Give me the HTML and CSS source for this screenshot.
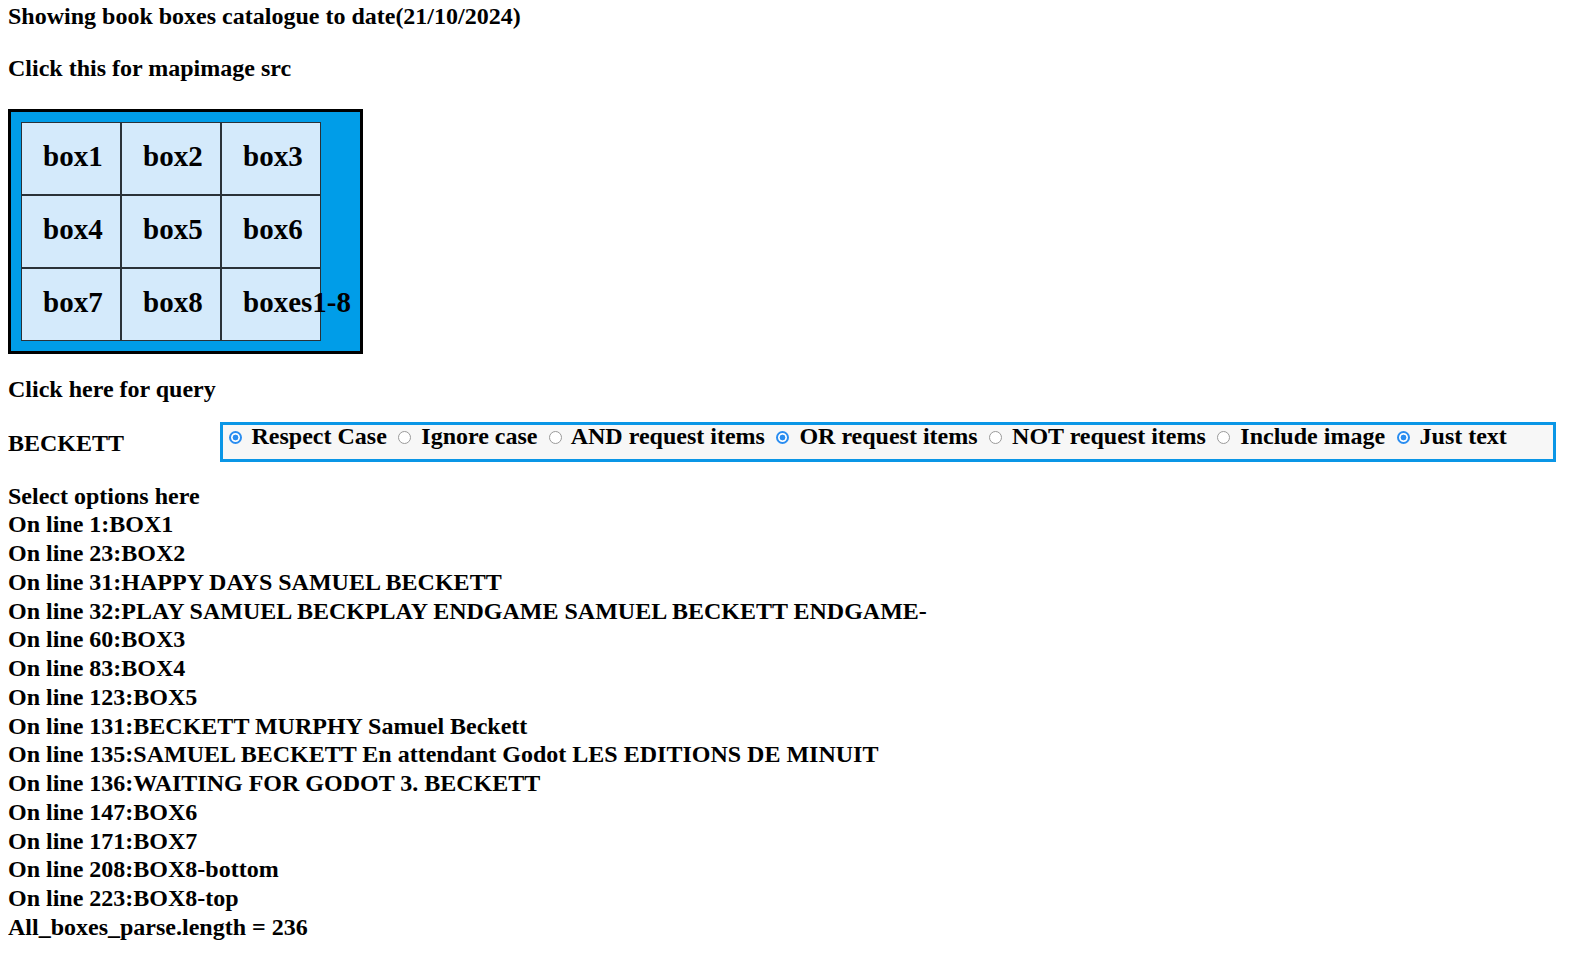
FILE: index.html
```html
<!DOCTYPE html>
<html>
<head>
<meta charset="utf-8">
<title>Book boxes catalogue</title>
<link rel="stylesheet" href="styles.css">
</head>
<body>
<div class="line title">Showing book boxes catalogue to date(21/10/2024)</div>
<div class="line maplink">Click this for mapimage src</div>
<div class="map">
  <div class="grid">
    <div class="cell">box1</div>
    <div class="cell">box2</div>
    <div class="cell">box3</div>
    <div class="cell">box4</div>
    <div class="cell">box5</div>
    <div class="cell">box6</div>
    <div class="cell">box7</div>
    <div class="cell">box8</div>
    <div class="cell">boxes1-8</div>
  </div>
</div>
<div class="line query">Click here for query</div>
<div class="row">
  <div class="line term">BECKETT</div>
  <div class="options"><span class="radio on"></span> Respect Case <span class="radio"></span> Ignore case <span class="radio"></span> AND request items <span class="radio on"></span> OR request items <span class="radio"></span> NOT request items <span class="radio"></span> Include image <span class="radio on"></span> Just text</div>
</div>
<div class="results">
  <div class="line">Select options here</div>
  <div class="line">On line 1:BOX1</div>
  <div class="line">On line 23:BOX2</div>
  <div class="line">On line 31:HAPPY DAYS SAMUEL BECKETT</div>
  <div class="line">On line 32:PLAY SAMUEL BECKPLAY ENDGAME SAMUEL BECKETT ENDGAME-</div>
  <div class="line">On line 60:BOX3</div>
  <div class="line">On line 83:BOX4</div>
  <div class="line">On line 123:BOX5</div>
  <div class="line">On line 131:BECKETT MURPHY Samuel Beckett</div>
  <div class="line">On line 135:SAMUEL BECKETT En attendant Godot LES EDITIONS DE MINUIT</div>
  <div class="line">On line 136:WAITING FOR GODOT 3. BECKETT</div>
  <div class="line">On line 147:BOX6</div>
  <div class="line">On line 171:BOX7</div>
  <div class="line">On line 208:BOX8-bottom</div>
  <div class="line">On line 223:BOX8-top</div>
  <div class="line">All_boxes_parse.length = 236</div>
</div>
</body>
</html>
```

FILE: styles.css
```css
html, body {
  background: #ffffff;
}
body {
  margin: 1.5px 8px 8px 8px;
  font-family: "Liberation Serif", "Times New Roman", serif;
  font-weight: bold;
  font-size: 24px;
  line-height: 28.75px;
  color: #000000;
}
.line {
  white-space: nowrap;
}
.maplink {
  margin-top: 23.25px;
}
.map {
  margin-top: 26.75px;
  width: 329px;
  border: 3px solid #000000;
  background: #009de8;
  padding: 10px;
}
.grid {
  display: grid;
  grid-template-columns: 98px 98px 98px;
  grid-template-rows: 71px 71px 71px;
  gap: 2px;
  padding: 1px;
  width: 298px;
  background: #2a3238;
}
.cell {
  background: #d4eafb;
  font-size: 29px;
  line-height: normal;
  display: flex;
  align-items: center;
  padding-left: 21px;
  padding-bottom: 5px;
  white-space: nowrap;
  overflow: visible;
}
.query {
  margin-top: 21px;
}
.row {
  margin-top: 18.25px;
  display: flex;
  align-items: flex-start;
}
.term {
  width: 212px;
  margin-top: 6.5px;
  flex: none;
}
.options {
  flex: 1;
  margin-right: 7px;
  border: 3px solid #0a96e6;
  background: #f7f7f7;
  line-height: 22px;
  padding: 0 0 12px 0;
  white-space: nowrap;
}
.radio {
  display: inline-block;
  width: 13px;
  height: 13px;
  box-sizing: border-box;
  margin: 3px 4px 0 5.5px;
  border-radius: 50%;
  border: 1.5px solid #9a9a9a;
  background: #ffffff;
  vertical-align: baseline;
}
.radio.on {
  border: 2px solid #2a8df0;
  background: radial-gradient(circle, #2a8df0 0 2.6px, #ffffff 3.2px);
}
.results {
  margin-top: 19.5px;
}
```
